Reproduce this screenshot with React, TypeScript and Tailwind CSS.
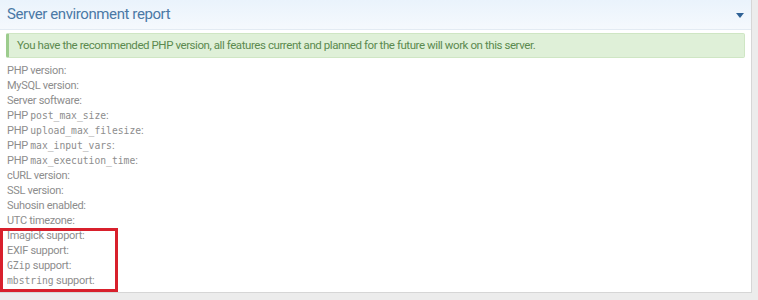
export default function App() {
  const rows: { pre?: string; code?: string; post: string }[] = [
    { post: 'PHP version:' },
    { post: 'MySQL version:' },
    { post: 'Server software:' },
    { pre: 'PHP ', code: 'post_max_size', post: ':' },
    { pre: 'PHP ', code: 'upload_max_filesize', post: ':' },
    { pre: 'PHP ', code: 'max_input_vars', post: ':' },
    { pre: 'PHP ', code: 'max_execution_time', post: ':' },
    { post: 'cURL version:' },
    { post: 'SSL version:' },
    { post: 'Suhosin enabled:' },
    { post: 'UTC timezone:' },
  ]

  const mono = "font-['DejaVu_Sans_Mono',monospace] text-[9.7px] leading-[15px] tracking-normal"

  return (
    <div className="h-[300px] w-[758px] bg-[#ececec] pr-[6px] pb-[7px] font-['Roboto',sans-serif]">
      <div className="flex h-full flex-col border-r border-b border-[#d6d6d6] bg-white">
        <div className="flex h-[30px] items-center justify-between border-b border-[#e3ebf3] bg-gradient-to-b from-[#eaf3fc] to-[#f5f9fd] pl-[7px] pr-[7px]">
          <span className="text-[15px] tracking-[-0.4px] text-[#4b79a6]">Server environment report</span>
          <svg width="8" height="5" viewBox="0 0 8 5" className="mt-[1px]">
            <path d="M0 0H8L4 5Z" fill="#2f6296" />
          </svg>
        </div>
        <div className="px-[6px] pt-[3px]">
          <div className="flex h-[25px] items-center rounded-[2px] border border-l-[3px] border-[#cfe6c4] border-l-[#9ccc8d] bg-[#dff0d8] pl-[8px] text-[11.5px] tracking-[-0.43px] text-[#5b8a4f]">
            You have the recommended PHP version, all features current and planned for the future will work on this server.
          </div>
        </div>
        <div className="mt-[5px] text-[11px] leading-[15px] tracking-[-0.3px] text-[#8d8d8d]">
          {rows.map((r, i) => (
            <div key={i} className="h-[15px] pl-[7px]">
              {r.pre}
              {r.code && <span className={mono}>{r.code}</span>}
              {r.post}
            </div>
          ))}
          <div className="w-[118px] pb-[4px] ring-[3px] ring-inset ring-[#d8202c]">
            <div className="h-[15px] pl-[7px]">Imagick support:</div>
            <div className="h-[15px] pl-[7px]">EXIF support:</div>
            <div className="h-[15px] pl-[7px]">
              <span className={mono}>GZip</span> support:
            </div>
            <div className="h-[15px] pl-[7px]">
              <span className={mono}>mbstring</span> support:
            </div>
          </div>
        </div>
      </div>
    </div>
  )
}
